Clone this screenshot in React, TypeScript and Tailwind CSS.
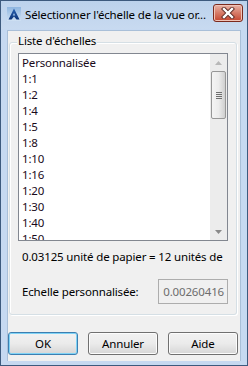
import React from "react";

const items = ["Personnalisée", "1:1", "1:2", "1:4", "1:5", "1:8", "1:10", "1:16", "1:20", "1:30", "1:40", "1:50"];

const font = { fontFamily: '"Noto Sans", "Open Sans", sans-serif' };

function Btn({ label, def }: { label: string; def?: boolean }) {
  return (
    <div
      className={
        "w-[70px] h-[23px] rounded-[3px] border flex items-center justify-center text-[11.5px] text-black bg-gradient-to-b from-[#f2f2f2] via-[#ebebeb] to-[#d6d6d6] " +
        (def ? "border-[#3c7fb1] shadow-[inset_0_0_0_1px_#7fd3f6]" : "border-[#707070] shadow-[inset_0_0_0_1px_#fcfcfc]")
      }
    >
      {label}
    </div>
  );
}

export default function App() {
  return (
    <div
      className="w-[248px] h-[366px] border border-[#3d5a7e] bg-[#c6d9f1] flex flex-col overflow-hidden tracking-[-0.15px]"
      style={font}
    >
      {/* title bar */}
      <div className="h-[28px] flex items-start bg-gradient-to-b from-[#bcd2ec] to-[#c8daf0] shrink-0">
        <svg width="14" height="14" viewBox="0 0 14 14" className="mt-[6px] ml-[6px] shrink-0">
          <defs>
            <linearGradient id="ig" x1="0" y1="0" x2="0" y2="1">
              <stop offset="0" stopColor="#8fb6e0" />
              <stop offset="1" stopColor="#cfe0f2" />
            </linearGradient>
            <linearGradient id="ag" x1="0" y1="0" x2="0" y2="1">
              <stop offset="0" stopColor="#2a64b4" />
              <stop offset="1" stopColor="#0d3478" />
            </linearGradient>
          </defs>
          <rect x="0" y="0" width="14" height="14" fill="url(#ig)" />
          <path d="M7 1.5 L12.5 12.5 L9.5 12.5 L7 9.5 L4.5 12.5 L1.5 12.5 Z" fill="url(#ag)" />
          <path d="M7 6 L8.3 8.6 L5.7 8.6 Z" fill="#9ec2e8" />
        </svg>
        <div className="ml-[4px] mt-[6px] text-[11.5px] leading-[16px] text-black whitespace-nowrap">
          Sélectionner l'échelle de la vue or...
        </div>
        <div className="ml-auto mr-[4px] mt-[3px] w-[30px] h-[18px] shrink-0 rounded-[3px] border border-[#7b2a1e] bg-gradient-to-b from-[#e8b2a6] via-[#d67a67] to-[#c5452f] shadow-[inset_0_0_0_1px_#f0c4b8] flex items-center justify-center">
          <svg width="14" height="12" viewBox="0 0 14 12">
            <path d="M3 2 L11 10 M11 2 L3 10" stroke="#5a2a24" strokeWidth="4.2" strokeLinecap="square" />
            <path d="M3 2 L11 10 M11 2 L3 10" stroke="#ffffff" strokeWidth="2.4" strokeLinecap="square" />
          </svg>
        </div>
      </div>

      {/* client */}
      <div className="ml-[6px] mr-[6px] mt-[1px] h-[331px] bg-[#f0f0f0] border border-[#a9bfd8] border-b-0 flex flex-col text-[11.5px] text-black">
        {/* group box */}
        <div className="relative mt-[11px] ml-[1px] w-[228px] h-[273px] rounded-[3px] border border-[#d5dfe5] shadow-[inset_1px_1px_0_#fff,1px_1px_0_#fff] flex flex-col">
          <div className="absolute left-[7px] top-[-10px] px-[1px] bg-[#f0f0f0] leading-[16px]">
            Liste d'échelles
          </div>
          {/* listbox */}
          <div className="ml-[8px] mt-[10px] w-[210px] h-[188px] border border-[#828790] bg-white flex overflow-hidden">
            <div className="flex-1 pl-[3px] pt-[1px] overflow-hidden">
              {items.map((it) => (
                <div key={it} className="h-[16px] leading-[16px] whitespace-nowrap text-[#1a0a1a]">
                  {it}
                </div>
              ))}
            </div>
            <div className="w-[17px] h-full bg-[#ececec] flex flex-col items-center">
              <div className="h-[17px] flex items-center justify-center">
                <svg width="7" height="4" viewBox="0 0 7 4">
                  <path d="M0 4 L3.5 0 L7 4 Z" fill="#b8b8b8" />
                </svg>
              </div>
              <div className="w-[15px] h-[48px] rounded-[2px] border border-[#979797] bg-gradient-to-r from-[#f4f4f4] via-[#ececec] to-[#cfcfcf] flex flex-col items-center justify-center gap-[1px]">
                <div className="w-[6px] h-[1px] bg-[#6f6f6f]" />
                <div className="w-[6px] h-[1px] bg-[#6f6f6f]" />
                <div className="w-[6px] h-[1px] bg-[#6f6f6f]" />
                <div className="w-[6px] h-[1px] bg-[#6f6f6f]" />
              </div>
              <div className="flex-1" />
              <div className="h-[17px] flex items-center justify-center">
                <svg width="7" height="4" viewBox="0 0 7 4">
                  <path d="M0 0 L3.5 4 L7 0 Z" fill="#8a8a8a" />
                </svg>
              </div>
            </div>
          </div>
          <div className="ml-[12px] mt-[8px] h-[16px] leading-[16px] whitespace-nowrap">
            0.03125 unité de papier = 12 unités de
          </div>
          <div className="mt-[14px] flex items-center">
            <div className="ml-[12px] leading-[16px] whitespace-nowrap">Echelle personnalisée:</div>
            <div className="ml-auto mr-[8px] w-[70px] h-[25px] border border-[#adadad] bg-[#f0f0f0] flex items-center justify-end pr-[3px] text-[#6d6d6d] overflow-hidden whitespace-nowrap">
              0.00260416
            </div>
          </div>
        </div>
        {/* buttons */}
        <div className="mt-[17px] flex gap-[10px]">
          <Btn label="OK" def />
          <Btn label="Annuler" />
          <Btn label="Aide" />
        </div>
      </div>
    </div>
  );
}
